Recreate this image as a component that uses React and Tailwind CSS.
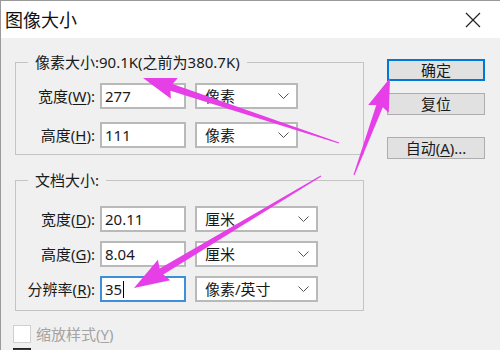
import React from "react";

const FONT = { fontFamily: "'Noto Sans', 'Noto Sans CJK SC', sans-serif" };

function arrowPoints(T, P, L, H, w0, w1) {
  const dx = P[0] - T[0];
  const dy = P[1] - T[1];
  const len = Math.hypot(dx, dy);
  const d = [dx / len, dy / len];
  const n = [-d[1], d[0]];
  const B = [P[0] - d[0] * L, P[1] - d[1] * L];
  const pts = [
    [T[0] + (n[0] * w0) / 2, T[1] + (n[1] * w0) / 2],
    [B[0] + (n[0] * w1) / 2, B[1] + (n[1] * w1) / 2],
    [B[0] + n[0] * H - d[0] * 3, B[1] + n[1] * H - d[1] * 3],
    P,
    [B[0] - n[0] * H - d[0] * 3, B[1] - n[1] * H - d[1] * 3],
    [B[0] - (n[0] * w1) / 2, B[1] - (n[1] * w1) / 2],
    [T[0] - (n[0] * w0) / 2, T[1] - (n[1] * w0) / 2],
  ];
  return pts.map((p) => p[0].toFixed(1) + "," + p[1].toFixed(1)).join(" ");
}

function Chevron() {
  return (
    <svg width="11" height="6" viewBox="0 0 11 6" className="shrink-0">
      <polyline points="0.5,0.5 5.5,5.5 10.5,0.5" fill="none" stroke="#555" strokeWidth="1" />
    </svg>
  );
}

function Select({ text, wide }) {
  return (
    <div
      className={
        "ml-[9px] h-[26px] flex items-center justify-between bg-white border-2 border-[#b9b9b9] pl-[8px] pr-[7px] text-[15px] leading-[20px] text-[#1a1a1a] " +
        (wide ? "w-[123px]" : "w-[103px]")
      }
    >
      <span>{text}</span>
      <Chevron />
    </div>
  );
}

function Row({ label, acc, value, unit, wide, focused, mt }) {
  return (
    <div className={"flex items-center " + mt}>
      <div className="w-[79px] text-right text-[15px] leading-[20px] text-[#1a1a1a] whitespace-nowrap">
        {label}(<u className="underline-offset-2">{acc}</u>):
      </div>
      <div
        className={
          "ml-[5px] w-[86px] h-[26px] flex items-center bg-white border-2 pl-[3px] text-[15px] leading-[20px] text-[#1a1a1a] " +
          (focused ? "border-[#3c8fd8]" : "border-[#b9b9b9]")
        }
      >
        <span>{value}</span>
        {focused && <span className="ml-[1px] w-[1px] h-[17px] bg-black" />}
      </div>
      <Select text={unit} wide={wide} />
    </div>
  );
}

function Button({ children, primary, mt }) {
  return (
    <div
      className={
        "w-[98px] h-[22px] flex items-center justify-center bg-[#e1e1e1] text-[15px] leading-[20px] text-[#1a1a1a] " +
        (primary ? "border-2 border-[#0078d7] " : "border border-[#adadad] ") +
        mt
      }
    >
      {children}
    </div>
  );
}

export default function App() {
  return (
    <div
      className="relative w-[500px] h-[350px] overflow-hidden bg-[#f0f0f0] border-l border-t border-[#9a9a9a]"
      style={FONT}
    >
      {/* title bar */}
      <div className="h-[37px] bg-white flex items-center justify-between pl-[4px] pr-[19px]">
        <span className="text-[18px] leading-[24px] text-[#111]">图像大小</span>
        <svg width="16" height="16" viewBox="0 0 16 16">
          <path d="M1 1 L15 15 M15 1 L1 15" stroke="#222" strokeWidth="1.2" fill="none" />
        </svg>
      </div>

      {/* body */}
      <div className="flex items-start">
        <div className="ml-[14px] w-[349px] flex flex-col">
          <fieldset className="mt-[14px] border border-[#c4c4c4] px-0 pb-[6px] pt-[11px]">
            <legend className="ml-[12px] px-[7px] text-[15px] leading-[20px] text-[#1a1a1a]">
              像素大小:90.1K(之前为380.7K)
            </legend>
            <Row label="宽度" acc="W" value="277" unit="像素" mt="" />
            <Row label="高度" acc="H" value="111" unit="像素" mt="mt-[13px]" />
          </fieldset>

          <fieldset className="mt-[15px] border border-[#c4c4c4] px-0 pb-[8px] pt-[16px]">
            <legend className="ml-[12px] px-[7px] text-[15px] leading-[20px] text-[#1a1a1a]">
              文档大小:
            </legend>
            <Row label="宽度" acc="D" value="20.11" unit="厘米" wide mt="" />
            <Row label="高度" acc="G" value="8.04" unit="厘米" wide mt="mt-[9px]" />
            <Row label="分辨率" acc="R" value="35" unit="像素/英寸" wide focused mt="mt-[9px]" />
          </fieldset>

          <div className="mt-[13px] -ml-[2px] flex items-center">
            <div className="w-[18px] h-[18px] bg-white border border-[#d0d0d0]" />
            <span className="ml-[5px] text-[15px] leading-[20px] text-[#a3a3a3]">
              缩放样式(<u className="underline-offset-2">Y</u>)
            </span>
          </div>
          <div className="mt-[4px] -ml-[2px] w-[18px] h-[18px] bg-[#3a3a3a] border border-[#222]" />
        </div>

        <div className="ml-[23px] mt-[21px] flex flex-col">
          <Button primary mt="">确定</Button>
          <Button mt="mt-[12px]">复位</Button>
          <Button mt="mt-[22px]">
            自动(<u className="underline-offset-2">A</u>)...
          </Button>
        </div>
      </div>

      {/* annotation arrows */}
      <svg
        className="absolute left-0 top-0 pointer-events-none"
        width="500"
        height="350"
        viewBox="0 0 500 350"
      >
        <g fill="#e73fe7">
          <polygon points={arrowPoints([338, 142], [142, 77], 30, 11, 1, 7)} />
          <polygon points={arrowPoints([353, 174], [389, 77], 30, 11, 1, 7)} />
          <polygon points={arrowPoints([320, 175], [133, 287], 32, 12, 1, 7)} />
        </g>
      </svg>
    </div>
  );
}
